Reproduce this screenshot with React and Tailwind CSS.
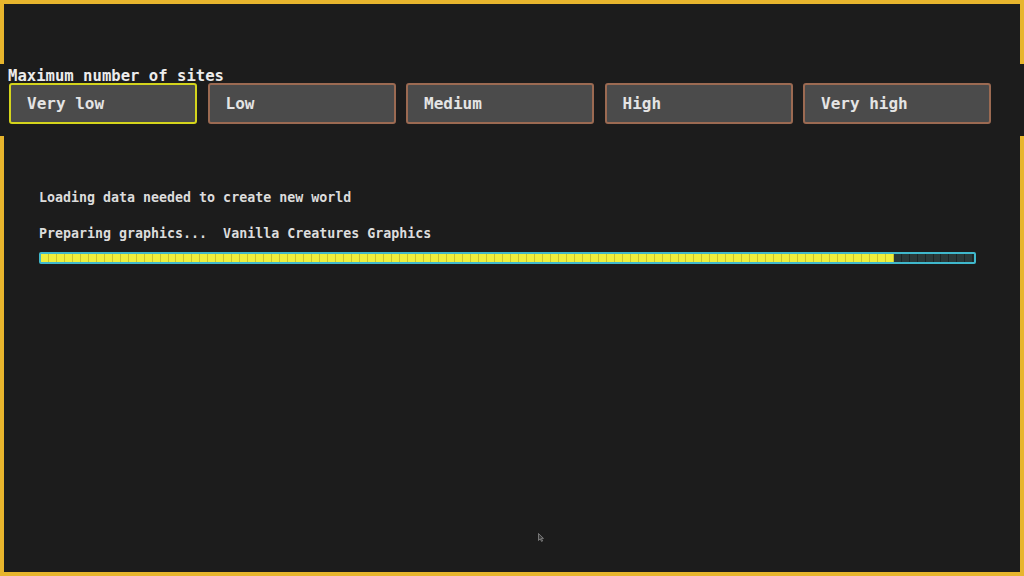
import React from "react";

const options = ["Very low", "Low", "Medium", "High", "Very high"];

const TOTAL = 117;
const FILLED = 107;

const App = () => {
  const segments = Array.from({ length: TOTAL }, (_, i) => i < FILLED);

  return (
    <div
      className="relative w-[1024px] h-[576px] border-4 border-[#e7b52d] bg-[#1c1c1c] flex flex-col"
      style={{ fontFamily: '"DejaVu Sans Mono", "Liberation Mono", monospace' }}
    >
      {/* spacer above the options band */}
      <div className="h-[60px] shrink-0" />

      {/* options band covers the side borders */}
      <div className="-mx-1 h-[72px] shrink-0 bg-[#1c1c1c] flex flex-col">
        <div className="pl-2 pt-[4px] text-[15.6px] leading-4 font-bold text-[#ececec]">
          Maximum number of sites
        </div>
        <div className="flex gap-[10.5px] pl-[9px] -mt-[1px]">
          {options.map((o, i) => (
            <div
              key={o}
              className={
                i === 0
                  ? "w-[188px] h-[41px] rounded-[3px] border-2 border-[#d4d41c] bg-[#4b4b4b] flex items-center pl-4 text-[16px] font-bold text-[#e4e4e4]"
                  : "w-[188px] h-[41px] rounded-[3px] border-2 border-[#9b6a52] bg-[#4b4b4b] flex items-center pl-4 text-[16px] font-bold text-[#e4e4e4]"
              }
            >
              {o}
            </div>
          ))}
        </div>
      </div>

      {/* loading text */}
      <div className="pl-[35px] pr-[44px] mt-[54px] text-[13.3px] leading-4 font-bold text-[#dcdcdc]">
        <div>Loading data needed to create new world</div>
        <div className="mt-5 whitespace-pre">Preparing graphics...  Vanilla Creatures Graphics</div>
        <div className="mt-[10px] h-[12px] rounded-[2px] border-2 border-[#3fb8cc] bg-[#1f2a2c] flex">
          {segments.map((f, i) => (
            <div
              key={i}
              className={
                f
                  ? "flex-1 h-full bg-[#eeee3c] border-r border-[#c9c42c]"
                  : "flex-1 h-full bg-[#2b3939] border-r border-[#1d2526]"
              }
            />
          ))}
        </div>
      </div>

      {/* mouse pointer */}
      <svg
        className="absolute left-[534px] top-[529px]"
        width="6"
        height="9"
        viewBox="0 0 6 9"
      >
        <path d="M0.5 0.5 L0.5 7.5 L2.2 5.8 L3.6 8.5 L4.6 8 L3.3 5.4 L5.5 5.4 Z" fill="#3a3a3a" stroke="#8a8a8a" strokeWidth="0.8" />
      </svg>
    </div>
  );
};

export default App;
